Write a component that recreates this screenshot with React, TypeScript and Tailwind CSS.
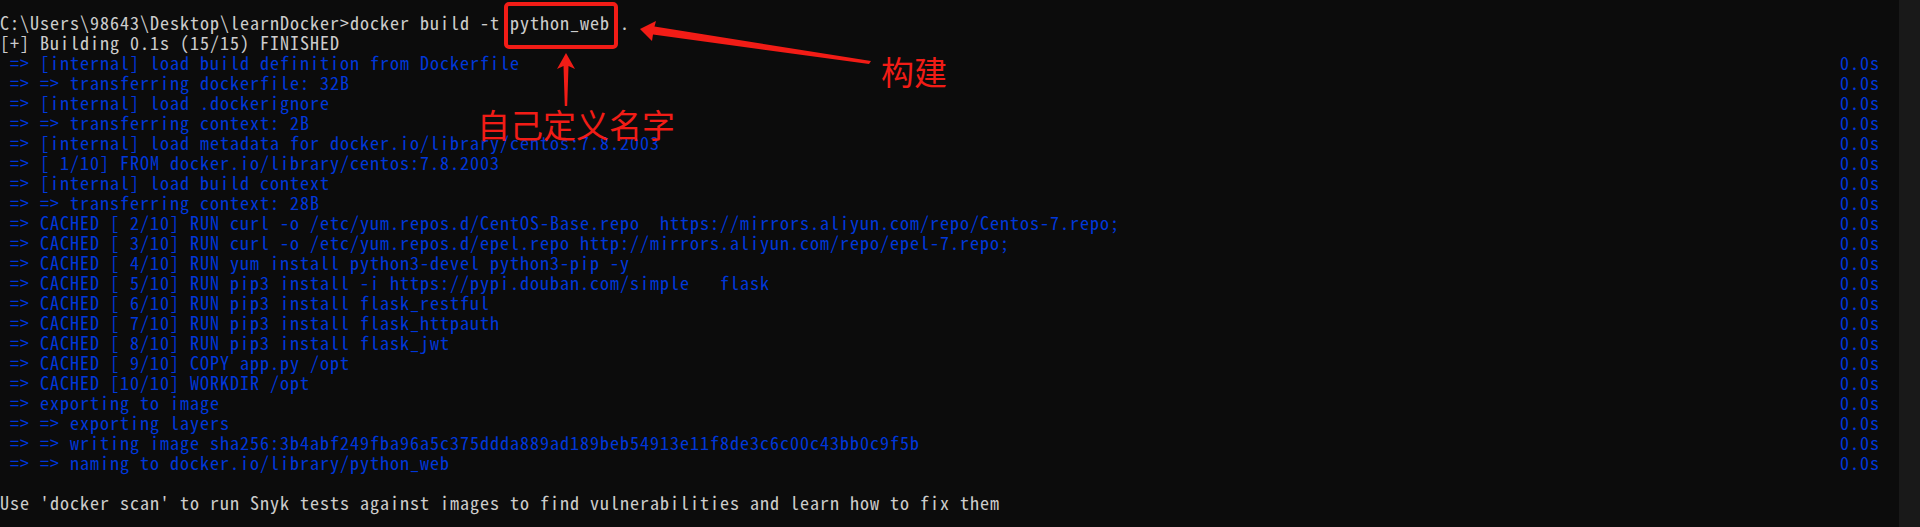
const WHITE = "text-[#cccccc]";
const BLUE = "text-[#0037da]";

type Line = { text: string; blue?: boolean; time?: boolean };

const lines: Line[] = [
  { text: "C:\\Users\\98643\\Desktop\\learnDocker>docker build -t python_web ." },
  { text: "[+] Building 0.1s (15/15) FINISHED" },
  { text: " => [internal] load build definition from Dockerfile", blue: true, time: true },
  { text: " => => transferring dockerfile: 32B", blue: true, time: true },
  { text: " => [internal] load .dockerignore", blue: true, time: true },
  { text: " => => transferring context: 2B", blue: true, time: true },
  { text: " => [internal] load metadata for docker.io/library/centos:7.8.2003", blue: true, time: true },
  { text: " => [ 1/10] FROM docker.io/library/centos:7.8.2003", blue: true, time: true },
  { text: " => [internal] load build context", blue: true, time: true },
  { text: " => => transferring context: 28B", blue: true, time: true },
  { text: " => CACHED [ 2/10] RUN curl -o /etc/yum.repos.d/CentOS-Base.repo  https://mirrors.aliyun.com/repo/Centos-7.repo;", blue: true, time: true },
  { text: " => CACHED [ 3/10] RUN curl -o /etc/yum.repos.d/epel.repo http://mirrors.aliyun.com/repo/epel-7.repo;", blue: true, time: true },
  { text: " => CACHED [ 4/10] RUN yum install python3-devel python3-pip -y", blue: true, time: true },
  { text: " => CACHED [ 5/10] RUN pip3 install -i https://pypi.douban.com/simple   flask", blue: true, time: true },
  { text: " => CACHED [ 6/10] RUN pip3 install flask_restful", blue: true, time: true },
  { text: " => CACHED [ 7/10] RUN pip3 install flask_httpauth", blue: true, time: true },
  { text: " => CACHED [ 8/10] RUN pip3 install flask_jwt", blue: true, time: true },
  { text: " => CACHED [ 9/10] COPY app.py /opt", blue: true, time: true },
  { text: " => CACHED [10/10] WORKDIR /opt", blue: true, time: true },
  { text: " => exporting to image", blue: true, time: true },
  { text: " => => exporting layers", blue: true, time: true },
  { text: " => => writing image sha256:3b4abf249fba96a5c375ddda889ad189beb54913e11f8de3c6c00c43bb0c9f5b", blue: true, time: true },
  { text: " => => naming to docker.io/library/python_web", blue: true, time: true },
  { text: "" },
  { text: "Use 'docker scan' to run Snyk tests against images to find vulnerabilities and learn how to fix them" },
];

export default function App() {
  return (
    <div className="relative flex w-[1920px] h-[527px] overflow-hidden bg-[#0c0c0c]">
      {/* console text */}
      <div
        className="flex-1 flex flex-col pt-[12px] pr-[19px] text-[18px] leading-[20px] tracking-[1px] whitespace-pre"
        style={{ fontFamily: '"Noto Sans Mono CJK SC", "Liberation Mono", monospace' }}
      >
        {lines.map((l, i) => (
          <div key={i} className={`flex justify-between h-[20px] ${l.blue ? BLUE : WHITE}`}>
            <span>{l.text}</span>
            {l.time && <span>0.0s</span>}
          </div>
        ))}
      </div>

      {/* scrollbar track */}
      <div className="w-[21px] h-full bg-[#191919]" />

      {/* annotations drawn over the screenshot */}
      <div className="absolute left-[504px] top-[2px] w-[114px] h-[47px] border-4 border-[#f21c16] rounded-[5px]" />

      <svg className="absolute left-0 top-0" width="1920" height="527" viewBox="0 0 1920 527">
        {/* arrow to the build command */}
        <polygon
          fill="#f21c16"
          points="640,29 656,21 654.5,26.5 871,61 869,64 653,34.5 652,41"
        />
        {/* arrow up to the image name */}
        <polygon
          fill="#f21c16"
          points="566,53 575,69 568.5,66 567.2,106 564.8,106 563.5,66 557,69"
        />
      </svg>

      <span
        className="absolute left-[881px] top-[55px] text-[33px] leading-[33px] text-[#f21c16]"
        style={{ fontFamily: '"Noto Sans CJK SC", sans-serif' }}
      >
        构建
      </span>
      <span
        className="absolute left-[477px] top-[108px] text-[33px] leading-[33px] text-[#f21c16]"
        style={{ fontFamily: '"Noto Sans CJK SC", sans-serif' }}
      >
        自己定义名字
      </span>
    </div>
  );
}
